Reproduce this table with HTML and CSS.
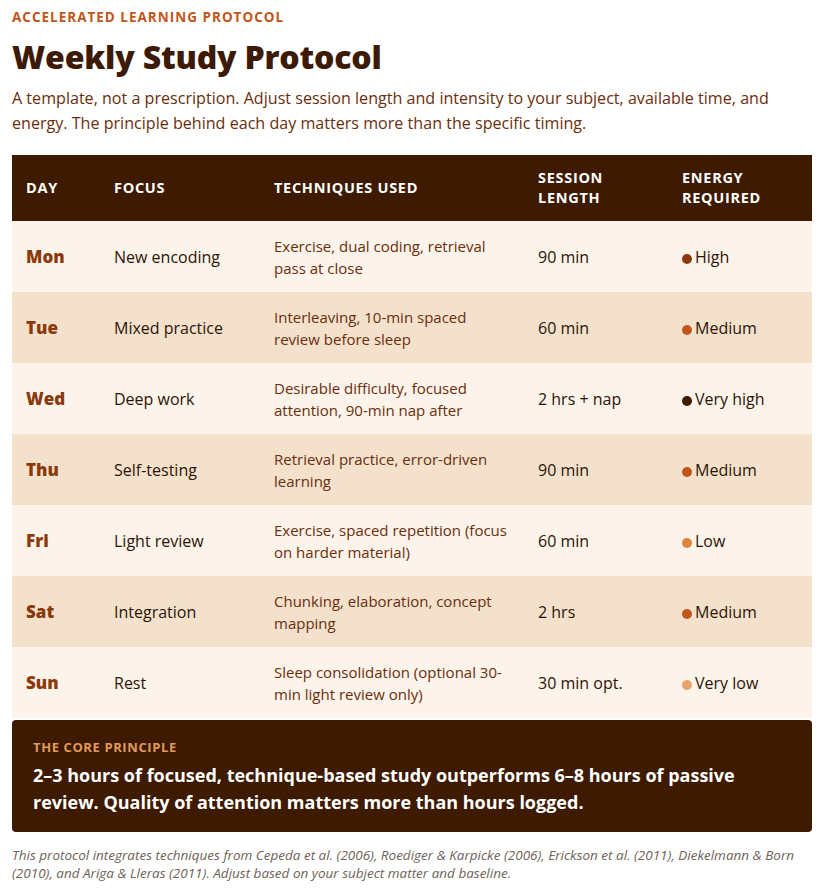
FILE: index.html
```html
<!DOCTYPE html>
<html lang="en">
<head>
<meta charset="utf-8">
<title>Weekly Study Protocol</title>
<link rel="stylesheet" href="styles.css">
</head>
<body>
<main class="page">
  <header class="intro">
    <p class="kicker">Accelerated Learning Protocol</p>
    <h1 class="title">Weekly Study Protocol</h1>
    <p class="lede">A template, not a prescription. Adjust session length and intensity to your subject, available time, and energy. The principle behind each day matters more than the specific timing.</p>
  </header>

  <table class="protocol">
    <thead>
      <tr>
        <th class="c-day">Day</th>
        <th class="c-focus">Focus</th>
        <th class="c-tech">Techniques Used</th>
        <th class="c-len">Session<br>Length</th>
        <th class="c-energy">Energy<br>Required</th>
      </tr>
    </thead>
    <tbody>
      <tr>
        <td class="day">Mon</td>
        <td class="focus">New encoding</td>
        <td class="tech">Exercise, dual coding, retrieval pass at close</td>
        <td class="len">90 min</td>
        <td class="energy"><span class="dot dot-high"></span>High</td>
      </tr>
      <tr>
        <td class="day">Tue</td>
        <td class="focus">Mixed practice</td>
        <td class="tech">Interleaving, 10-min spaced review before sleep</td>
        <td class="len">60 min</td>
        <td class="energy"><span class="dot dot-med"></span>Medium</td>
      </tr>
      <tr>
        <td class="day">Wed</td>
        <td class="focus">Deep work</td>
        <td class="tech">Desirable difficulty, focused attention, 90-min nap after</td>
        <td class="len">2 hrs + nap</td>
        <td class="energy"><span class="dot dot-vhigh"></span>Very high</td>
      </tr>
      <tr>
        <td class="day">Thu</td>
        <td class="focus">Self-testing</td>
        <td class="tech">Retrieval practice, error-driven learning</td>
        <td class="len">90 min</td>
        <td class="energy"><span class="dot dot-med"></span>Medium</td>
      </tr>
      <tr>
        <td class="day">Fri</td>
        <td class="focus">Light review</td>
        <td class="tech">Exercise, spaced repetition (focus on harder material)</td>
        <td class="len">60 min</td>
        <td class="energy"><span class="dot dot-low"></span>Low</td>
      </tr>
      <tr>
        <td class="day">Sat</td>
        <td class="focus">Integration</td>
        <td class="tech">Chunking, elaboration, concept mapping</td>
        <td class="len">2 hrs</td>
        <td class="energy"><span class="dot dot-med"></span>Medium</td>
      </tr>
      <tr>
        <td class="day">Sun</td>
        <td class="focus">Rest</td>
        <td class="tech">Sleep consolidation (optional 30-min light review only)</td>
        <td class="len">30 min opt.</td>
        <td class="energy"><span class="dot dot-vlow"></span>Very low</td>
      </tr>
    </tbody>
  </table>

  <section class="core">
    <p class="core-label">The Core Principle</p>
    <p class="core-text">2–3 hours of focused, technique-based study outperforms 6–8 hours of passive review. Quality of attention matters more than hours logged.</p>
  </section>

  <p class="sources">This protocol integrates techniques from Cepeda et al. (2006), Roediger &amp; Karpicke (2006), Erickson et al. (2011), Diekelmann &amp; Born (2010), and Ariga &amp; Lleras (2011). Adjust based on your subject matter and baseline.</p>
</main>
</body>
</html>
```

FILE: styles.css
```css
* { box-sizing: border-box; }

html, body {
  margin: 0;
  padding: 0;
  background: #ffffff;
}

body {
  font-family: "Open Sans", "Noto Sans", sans-serif;
  color: #3d1a05;
}

.page {
  width: 800px;
  margin: 0 12px;
  padding-top: 8px;
}

.intro p, .intro h1 { margin: 0; }

.kicker {
  font-size: 13.5px;
  font-weight: 700;
  letter-spacing: 1px;
  text-transform: uppercase;
  color: #c0561a;
  line-height: 18px;
}

.title {
  margin-top: 11px !important;
  font-size: 32px;
  font-weight: 800;
  line-height: 40px;
  color: #3d1a05;
  letter-spacing: -0.2px;
}

.lede {
  margin-top: 9px !important;
  font-size: 16.1px;
  line-height: 25px;
  color: #6b2e0c;
}

.protocol {
  margin-top: 19px;
  width: 800px;
  border-collapse: collapse;
  table-layout: fixed;
}

.c-day { width: 88px; }
.c-focus { width: 160px; }
.c-tech { width: 264px; }
.c-len { width: 144px; }
.c-energy { width: 144px; }

.protocol th {
  background: #3d1a00;
  color: #ffffff;
  text-align: left;
  font-size: 14.5px;
  font-weight: 700;
  text-transform: uppercase;
  letter-spacing: 0.7px;
  line-height: 20px;
  padding: 13px 14px;
  height: 66px;
}

.protocol td {
  padding: 0 14px;
  height: 71px;
  vertical-align: middle;
}

.protocol tbody tr:nth-child(odd) td { background: #fcf3ea; }
.protocol tbody tr:nth-child(even) td { background: #f3e1cc; }

.day {
  font-size: 17px;
  font-weight: 800;
  color: #8a3a08;
}

.focus {
  font-size: 16px;
  color: #2e1405;
}

.tech {
  font-size: 15px;
  line-height: 22px;
  color: #6b2e0c;
}

.len {
  font-size: 16px;
  color: #2e1405;
}

.energy {
  font-size: 16px;
  color: #2e1405;
}

.dot {
  display: inline-block;
  width: 10px;
  height: 10px;
  border-radius: 50%;
  margin-right: 3px;
  vertical-align: -1px;
}

.dot-vhigh { background: #3d1a00; }
.dot-high { background: #8a3a08; }
.dot-med { background: #c0561a; }
.dot-low { background: #d9843f; }
.dot-vlow { background: #e5a56b; }

.core {
  margin-top: 2px;
  background: #3d1a00;
  border-radius: 4px;
  padding: 19px 21px 16px;
}

.core p { margin: 0; }

.core-label {
  font-size: 13px;
  font-weight: 700;
  letter-spacing: 0.6px;
  text-transform: uppercase;
  color: #e09a5c;
  line-height: 16px;
}

.core-text {
  margin-top: 7px !important;
  font-size: 18px;
  font-weight: 700;
  line-height: 27px;
  color: #ffffff;
}

.sources {
  margin: 14px 0 0;
  font-size: 13.5px;
  font-style: italic;
  line-height: 18px;
  color: #6e6259;
}
```
